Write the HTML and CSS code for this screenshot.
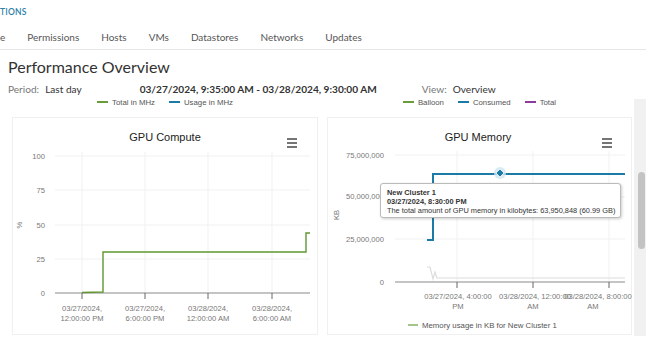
FILE: index.html
```html
<!DOCTYPE html>
<html lang="en">
<head>
  <meta charset="UTF-8" />
  <title>Performance Overview</title>
  <link rel="stylesheet" href="styles.css">
</head>
<body>

<div class="crumb">TIONS</div>

<nav class="tabs">
  <span class="tab cut">e</span>
  <span class="tab">Permissions</span>
  <span class="tab">Hosts</span>
  <span class="tab">VMs</span>
  <span class="tab">Datastores</span>
  <span class="tab">Networks</span>
  <span class="tab">Updates</span>
</nav>

<h1 class="page-title">Performance Overview</h1>

<div class="period">
  <span class="lbl">Period:</span>
  <span class="val">Last day</span>
  <span class="range">03/27/2024, 9:35:00 AM - 03/28/2024, 9:30:00 AM</span>
  <span class="lbl view-lbl">View:</span>
  <span class="val">Overview</span>
</div>

<div class="scroller">
  <div class="scroll-content">
    <div class="legends">
      <div class="legend">
        <span class="item"><i class="swatch green"></i>Total in MHz</span>
        <span class="item"><i class="swatch blue"></i>Usage in MHz</span>
      </div>
      <div class="legend">
        <span class="item"><i class="swatch green"></i>Balloon</span>
        <span class="item"><i class="swatch blue"></i>Consumed</span>
        <span class="item"><i class="swatch purple"></i>Total</span>
      </div>
    </div>

    <div class="cards">
      <section class="card">
        <svg class="chart" width="306" height="218" viewBox="0 0 306 218">
          <text class="title" x="153" y="24" text-anchor="middle">GPU Compute</text>
          <g class="menu">
            <line x1="275" y1="22" x2="285" y2="22"/>
            <line x1="275" y1="26" x2="285" y2="26"/>
            <line x1="275" y1="30" x2="285" y2="30"/>
          </g>
          <g class="grid">
            <line x1="43" y1="39" x2="298" y2="39"/>
            <line x1="43" y1="73" x2="298" y2="73"/>
            <line x1="43" y1="108" x2="298" y2="108"/>
            <line x1="43" y1="142" x2="298" y2="142"/>
            <line x1="70" y1="35" x2="70" y2="176"/>
            <line x1="133" y1="35" x2="133" y2="176"/>
            <line x1="196" y1="35" x2="196" y2="176"/>
            <line x1="260" y1="35" x2="260" y2="176"/>
          </g>
          <g class="ylabels" text-anchor="end">
            <text x="33" y="42">100</text>
            <text x="33" y="76">75</text>
            <text x="33" y="111">50</text>
            <text x="33" y="145">25</text>
            <text x="33" y="179">0</text>
          </g>
          <text class="axis-title" transform="translate(10 108) rotate(-90)" text-anchor="middle">%</text>
          <line class="axis" x1="43" y1="176" x2="298" y2="176"/>
          <g class="ticks">
            <line x1="70" y1="176" x2="70" y2="182"/>
            <line x1="133" y1="176" x2="133" y2="182"/>
            <line x1="196" y1="176" x2="196" y2="182"/>
            <line x1="260" y1="176" x2="260" y2="182"/>
          </g>
          <g class="xlabels" text-anchor="middle">
            <text x="70" y="194">03/27/2024,</text>
            <text x="70" y="204">12:00:00 PM</text>
            <text x="133" y="194">03/27/2024,</text>
            <text x="133" y="204">6:00:00 PM</text>
            <text x="196" y="194">03/28/2024,</text>
            <text x="196" y="204">12:00:00 AM</text>
            <text x="260" y="194">03/28/2024,</text>
            <text x="260" y="204">6:00:00 AM</text>
          </g>
          <path class="series-green" d="M70 175.5 L91 175 L91 135 L294 135 L294 116 L298 116"/>
        </svg>
      </section>

      <section class="card">
        <svg class="chart" width="305" height="218" viewBox="0 0 305 218">
          <text class="title" x="151" y="24" text-anchor="middle">GPU Memory</text>
          <g class="menu">
            <line x1="275" y1="22" x2="285" y2="22"/>
            <line x1="275" y1="26" x2="285" y2="26"/>
            <line x1="275" y1="30" x2="285" y2="30"/>
          </g>
          <g class="grid">
            <line x1="68" y1="38" x2="298" y2="38"/>
            <line x1="68" y1="80" x2="298" y2="80"/>
            <line x1="68" y1="122" x2="298" y2="122"/>
            <line x1="130" y1="34" x2="130" y2="165"/>
            <line x1="206" y1="34" x2="206" y2="165"/>
            <line x1="282" y1="34" x2="282" y2="165"/>
          </g>
          <g class="ylabels" text-anchor="end">
            <text x="57" y="41">75,000,000</text>
            <text x="57" y="82">50,000,000</text>
            <text x="57" y="125">25,000,000</text>
            <text x="57" y="168">0</text>
          </g>
          <text class="axis-title" transform="translate(12 98) rotate(-90)" text-anchor="middle">KB</text>
          <path class="series-gray" d="M100 150 L103 150 L106 162 L108 155 L110 161 L298 161"/>
          <line class="axis" x1="68" y1="165" x2="298" y2="165"/>
          <g class="ticks">
            <line x1="130" y1="165" x2="130" y2="171"/>
            <line x1="206" y1="165" x2="206" y2="171"/>
            <line x1="282" y1="165" x2="282" y2="171"/>
          </g>
          <g class="xlabels" text-anchor="middle">
            <text x="131" y="182">03/27/2024, 4:00:00</text>
            <text x="131" y="192">PM</text>
            <text x="208" y="182">03/28/2024, 12:00:00</text>
            <text x="206" y="192">AM</text>
            <text x="271" y="182">03/28/2024, 8:00:00</text>
            <text x="266" y="192">AM</text>
          </g>
          <path class="series-blue" d="M100 123 L106 123 L106 57 L298 57"/>
          <circle class="halo" cx="173" cy="56" r="6"/>
          <path class="marker" d="M173 52 L177 56 L173 60 L169 56 Z"/>
          <line class="legend-line" x1="81" y1="208" x2="91" y2="208"/>
          <text class="legend-text" x="95" y="211">Memory usage in KB for New Cluster 1</text>
        </svg>
        <div class="tooltip">
          <div class="tt-strong">New Cluster 1</div>
          <div class="tt-strong">03/27/2024, 8:30:00 PM</div>
          <div>The total amount of GPU memory in kilobytes: 63,950,848 (60.99 GB)</div>
        </div>
      </section>
    </div>
  </div>

  <div class="scrollbar"><div class="thumb"></div></div>
</div>

</body>
</html>
```

FILE: styles.css
```css
body {
  margin: 0;
  font-family: Lato, 'Open Sans', sans-serif;
  background: #fff;
  color: #333;
  overflow: hidden;
}

.crumb {
  margin-top: 6px;
  height: 12px;
  line-height: 12px;
  font-size: 8.5px;
  font-weight: 600;
  letter-spacing: 0.2px;
  color: #2f7fa8;
}

.tabs {
  display: flex;
  gap: 22px;
  padding: 12px 0 4px;
  line-height: 15px;
  font-size: 10px;
  color: #565656;
  border-bottom: 1px solid #e6e6e6;
}

.page-title {
  margin: 7px 0 0 8px;
  font-size: 16px;
  line-height: 20px;
  font-weight: 400;
  color: #333;
}

.period {
  display: flex;
  align-items: baseline;
  margin: 5px 0 0 8px;
  line-height: 14px;
  font-size: 10.1px;
}

.period .lbl {
  color: #777;
  margin-right: 6px;
}

.period .val {
  color: #333;
}

.period .range {
  margin-left: 58px;
  font-weight: 700;
  color: #333;
}

.period .view-lbl {
  margin-left: 45px;
}

.scroller {
  display: flex;
  height: 240px;
  overflow: hidden;
}

.scroll-content {
  flex: 1;
  padding-left: 12px;
}

.legends {
  display: grid;
  grid-template-columns: 306px 305px;
  column-gap: 9px;
  height: 12px;
  align-items: center;
}

.legend {
  display: flex;
  justify-content: center;
  gap: 14px;
  font-family: 'Liberation Sans', Arial, sans-serif;
  font-size: 7.8px;
  color: #555;
}

.legend .item {
  display: flex;
  align-items: center;
}

.swatch {
  display: inline-block;
  width: 11px;
  height: 1.5px;
  margin-right: 4px;
}

.swatch.green { background: #6a9d3a; }
.swatch.blue { background: #1b7ba6; }
.swatch.purple { background: #8e3b9e; }

.cards {
  display: grid;
  grid-template-columns: 306px 305px;
  column-gap: 9px;
  margin-top: 9px;
}

.card {
  position: relative;
  height: 218px;
  background: #fff;
  border: 1px solid #f0f0f0;
  box-sizing: border-box;
}

.chart {
  display: block;
  margin: -1px;
  font-family: 'Liberation Sans', Arial, sans-serif;
}

.chart .title {
  font-size: 11px;
  fill: #222;
}

.chart .menu line {
  stroke: #666;
  stroke-width: 1.8;
}

.chart .grid line {
  stroke: #f1f1f1;
  stroke-width: 1;
}

.chart .ylabels,
.chart .xlabels,
.chart .axis-title {
  font-size: 7.6px;
  fill: #777;
}

.chart .axis {
  stroke: #8a8a8a;
  stroke-width: 1.2;
}

.chart .ticks line {
  stroke: #666;
  stroke-width: 1;
}

.series-green {
  fill: none;
  stroke: #5f9630;
  stroke-width: 1.4;
}

.series-blue {
  fill: none;
  stroke: #1b7ba6;
  stroke-width: 2;
}

.series-gray {
  fill: none;
  stroke: #dcdcdc;
  stroke-width: 1.2;
}

.halo {
  fill: #cfe6f1;
  opacity: 0.8;
}

.marker {
  fill: #1b7ba6;
  stroke: #fff;
  stroke-width: 0.8;
}

.legend-line {
  stroke: #6a9d3a;
  stroke-width: 1.2;
}

.legend-text {
  font-size: 7.8px;
  fill: #555;
}

.tooltip {
  position: absolute;
  left: 52px;
  top: 65px;
  width: 241px;
  height: 35px;
  box-sizing: border-box;
  padding: 4px 6px;
  background: #fff;
  border: 1px solid #bbb;
  border-radius: 3px;
  box-shadow: 1px 1px 3px rgba(0, 0, 0, 0.2);
  font-family: 'Liberation Sans', Arial, sans-serif;
  font-size: 7.4px;
  line-height: 9px;
  color: #333;
  white-space: nowrap;
}

.tt-strong {
  font-weight: 700;
}

.scrollbar {
  width: 12px;
  margin-top: 3px;
  background: #f1f1f1;
  padding-top: 73px;
  box-sizing: border-box;
}

.thumb {
  width: 7px;
  height: 77px;
  margin-left: 4px;
  border-radius: 4px;
  background: #c3c3c3;
}
```
